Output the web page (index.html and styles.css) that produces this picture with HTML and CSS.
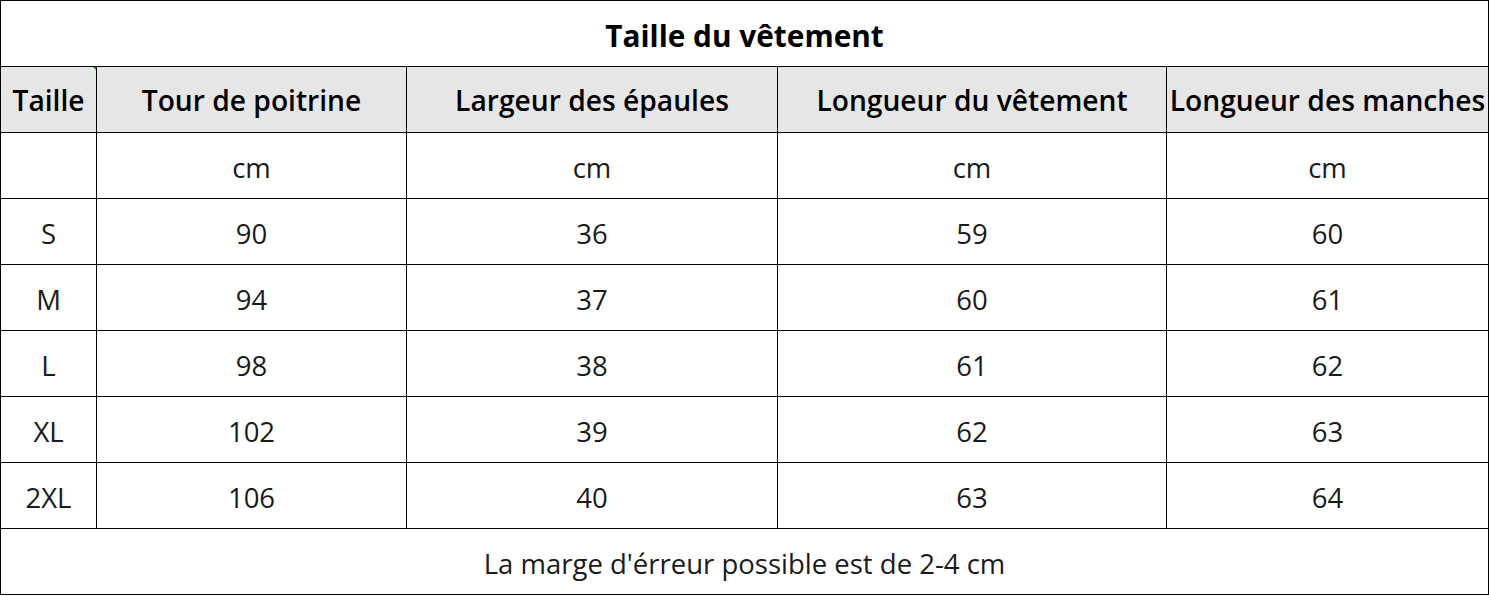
FILE: index.html
```html
<!DOCTYPE html>
<html lang="fr">
<head>
<meta charset="utf-8">
<link rel="stylesheet" href="styles.css">
</head>
<body>
<table class="size-table">
  <colgroup>
    <col class="c1"><col class="c2"><col class="c3"><col class="c4"><col class="c5">
  </colgroup>
  <tr><td class="title" colspan="5">Taille du vêtement</td></tr>
  <tr class="head">
    <td class="first-head">Taille</td>
    <td>Tour de poitrine</td>
    <td>Largeur des épaules</td>
    <td>Longueur du vêtement</td>
    <td>Longueur des manches</td>
  </tr>
  <tr><td></td><td>cm</td><td>cm</td><td>cm</td><td>cm</td></tr>
  <tr><td>S</td><td>90</td><td>36</td><td>59</td><td>60</td></tr>
  <tr><td>M</td><td>94</td><td>37</td><td>60</td><td>61</td></tr>
  <tr><td>L</td><td>98</td><td>38</td><td>61</td><td>62</td></tr>
  <tr><td>XL</td><td>102</td><td>39</td><td>62</td><td>63</td></tr>
  <tr><td>2XL</td><td>106</td><td>40</td><td>63</td><td>64</td></tr>
  <tr><td class="note" colspan="5">La marge d'érreur possible est de 2-4 cm</td></tr>
</table>
</body>
</html>
```
FILE: styles.css
```css
html, body {
  margin: 0;
  padding: 0;
  background: #fff;
}
.size-table {
  border-collapse: collapse;
  table-layout: fixed;
  width: 1488px;
  font-family: "Open Sans", "Noto Sans", sans-serif;
  color: #1a1a1a;
}
.c1 { width: 96px; }
.c2 { width: 310px; }
.c3 { width: 371px; }
.c4 { width: 389px; }
.c5 { width: 322px; }
.size-table td {
  border: 1px solid #000;
  height: 62px;
  padding: 3px 0 0;
  text-align: center;
  vertical-align: middle;
  font-size: 27.5px;
  line-height: 1.2;
  white-space: nowrap;
  overflow: hidden;
}
.size-table td.title {
  height: 61px;
  padding-top: 4px;
  font-size: 29.8px;
  font-weight: 700;
  color: #000;
}
.head td {
  background: #e6e6e6;
  font-weight: 600;
  font-size: 28.2px;
  color: #000;
}
.first-head {
  position: relative;
}
.first-head::after {
  content: "";
  position: absolute;
  right: -1px;
  top: -1px;
  border-top: 5px solid #0a8a0a;
  border-left: 5px solid transparent;
}
```
